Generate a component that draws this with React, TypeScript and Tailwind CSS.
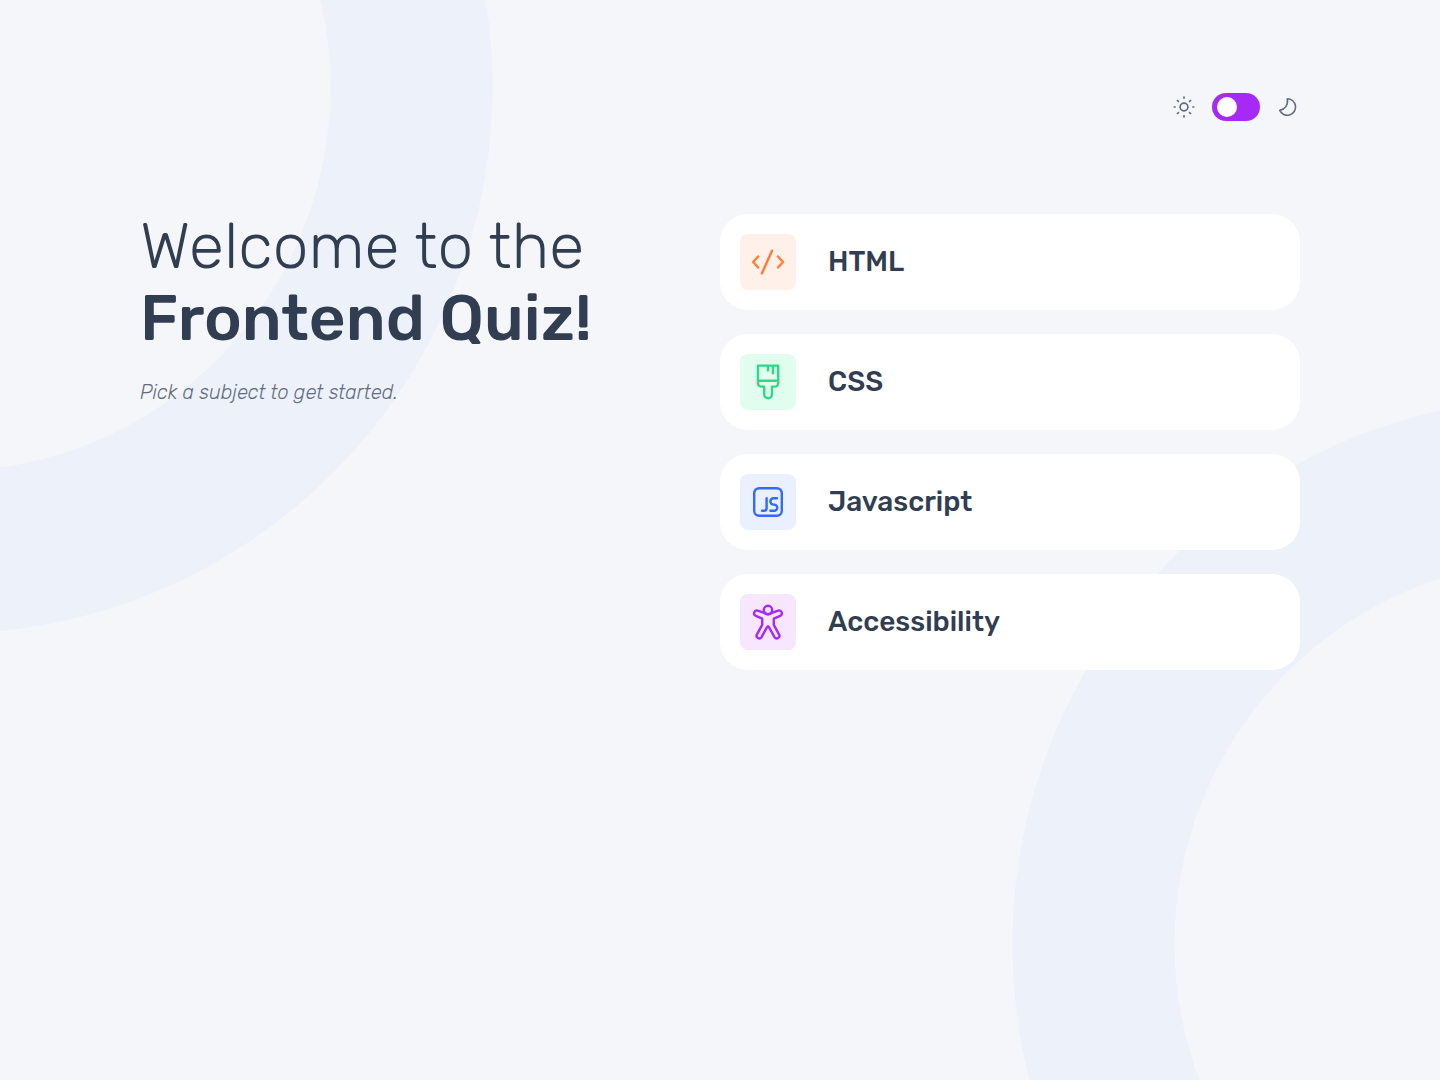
import { useState, type ReactNode } from "react";

function Rings() {
  return (
    <svg
      className="pointer-events-none absolute inset-0 h-full w-full"
      viewBox="0 0 1440 1080"
      preserveAspectRatio="xMidYMid slice"
      fill="none"
      stroke="#ECF1FA"
      strokeWidth="162"
      aria-hidden="true"
    >
      <circle cx="-54" cy="87" r="465.5" />
      <circle cx="1559" cy="944" r="465.5" />
    </svg>
  );
}

function SunIcon() {
  return (
    <svg className="size-6" viewBox="0 0 24 24" fill="none" stroke="#626C7F" strokeWidth="1.7" aria-hidden="true">
      <circle cx="12" cy="12" r="3.9" />
      <path d="M12 1.6v2.1M12 20.3v2.1M1.6 12h2.1M20.3 12h2.1M5 5l1.9 1.9M17.1 17.1 19 19M19 5l-1.9 1.9M6.9 17.1 5 19" />
    </svg>
  );
}

function MoonIcon() {
  return (
    <svg className="size-6" viewBox="0 0 24 24" fill="none" stroke="#626C7F" strokeWidth="1.6" strokeLinejoin="round" aria-hidden="true">
      <path d="M11.3 3.7A8.3 8.3 0 1 1 3.7 15.4C8.9 14.5 12.4 10.2 11.3 3.7Z" />
    </svg>
  );
}

function HtmlIcon() {
  return (
    <svg className="size-14" viewBox="0 0 56 56" fill="none" stroke="#FF7E35" strokeWidth="2.5" strokeLinecap="round" strokeLinejoin="round" aria-hidden="true">
      <path d="m18.2 22.5-5 5.5 5 5.5M38 22.5l5 5.5-5 5.5M32 16.7 22 39.3" />
    </svg>
  );
}

function CssIcon() {
  return (
    <svg className="size-14" viewBox="0 0 56 56" fill="none" stroke="#2FD887" strokeWidth="2.4" strokeLinejoin="round" aria-hidden="true">
      <path d="M18 11.6h20.2v17.6a3.4 3.4 0 0 1-3.4 3.4H32v7.7a3.9 3.9 0 0 1-7.8 0v-7.7h-2.8a3.4 3.4 0 0 1-3.4-3.4ZM18 26.8h20.2M28 11.6v6M33 11.6v8.7" />
    </svg>
  );
}

function JsIcon() {
  return (
    <svg className="size-14" viewBox="0 0 56 56" fill="none" stroke="#306AFF" strokeWidth="2.4" strokeLinecap="round" strokeLinejoin="round" aria-hidden="true">
      <rect x="14.2" y="14.2" width="27.6" height="27.6" rx="5" />
      <path d="M26.6 24.2v10a2.6 2.6 0 0 1-2.6 2.6h-2M37 24.2h-3.6a3 3 0 0 0-3 3v.4a3 3 0 0 0 3 3h.8a3 3 0 0 1 3 3v.2a3 3 0 0 1-3 3h-3.8" />
    </svg>
  );
}

function AccessibilityIcon() {
  return (
    <svg className="size-14" viewBox="0 0 56 56" fill="none" stroke="#A729F5" strokeWidth="2.4" strokeLinejoin="round" aria-hidden="true">
      <circle cx="28" cy="16" r="4.2" />
      <path d="M23.4 18.6 17.8 16.7A2.7 2.7 0 0 0 15.9 21.8L22.2 24.6V30.8L17 40.3A2.6 2.6 0 0 0 21.5 43.2L26.9 33.4Q28 31.6 29.1 33.4L34.5 43.2A2.6 2.6 0 0 0 39 40.3L33.8 30.8V24.6L40.1 21.8A2.7 2.7 0 0 0 38.2 16.7L32.6 18.6Q28 21.8 23.4 18.6Z" />
    </svg>
  );
}

const subjects: { name: string; tile: string; icon: ReactNode }[] = [
  { name: "HTML", tile: "bg-[#FFF1E9]", icon: <HtmlIcon /> },
  { name: "CSS", tile: "bg-[#E0FDEF]", icon: <CssIcon /> },
  { name: "Javascript", tile: "bg-[#EBF0FF]", icon: <JsIcon /> },
  { name: "Accessibility", tile: "bg-[#F6E7FF]", icon: <AccessibilityIcon /> },
];

export default function App() {
  const [dark, setDark] = useState(false);

  return (
    <div className="relative min-h-screen overflow-hidden bg-[#F4F6FA] font-['Rubik','Roboto',sans-serif] text-[#313E51]">
      <Rings />
      <div className="relative mx-auto max-w-[1208px] px-6 pt-[93px] pb-12">
        <header className="flex items-center justify-end gap-4">
          <SunIcon />
          <label className="flex cursor-pointer">
            <input
              type="checkbox"
              role="switch"
              aria-label="Dark mode"
              className="peer sr-only"
              checked={dark}
              onChange={(e) => setDark(e.target.checked)}
            />
            <span className="flex h-7 w-12 items-center rounded-full bg-[#A729F5] px-[5px] peer-checked:justify-end">
              <span className="size-5 rounded-full bg-white" />
            </span>
          </label>
          <MoonIcon />
        </header>

        <main className="mt-[93px] grid gap-10 lg:grid-cols-2 lg:gap-0">
          <section>
            <h1 className="flex flex-col gap-2 text-[64px] leading-[64px] font-light">
              <span>Welcome to the</span>
              <strong className="font-medium">Frontend Quiz!</strong>
            </h1>
            <p className="mt-7 text-xl leading-7 font-light text-[#626C7F] italic">
              Pick a subject to get started.
            </p>
          </section>

          <ul className="flex flex-col gap-6">
            {subjects.map((s) => (
              <li key={s.name}>
                <button
                  type="button"
                  className="flex w-full cursor-pointer items-center gap-8 rounded-[28px] bg-white p-5 text-left text-[28px] leading-7 font-medium"
                >
                  <span className={`${s.tile} rounded-lg`}>{s.icon}</span>
                  {s.name}
                </button>
              </li>
            ))}
          </ul>
        </main>
      </div>
    </div>
  );
}
